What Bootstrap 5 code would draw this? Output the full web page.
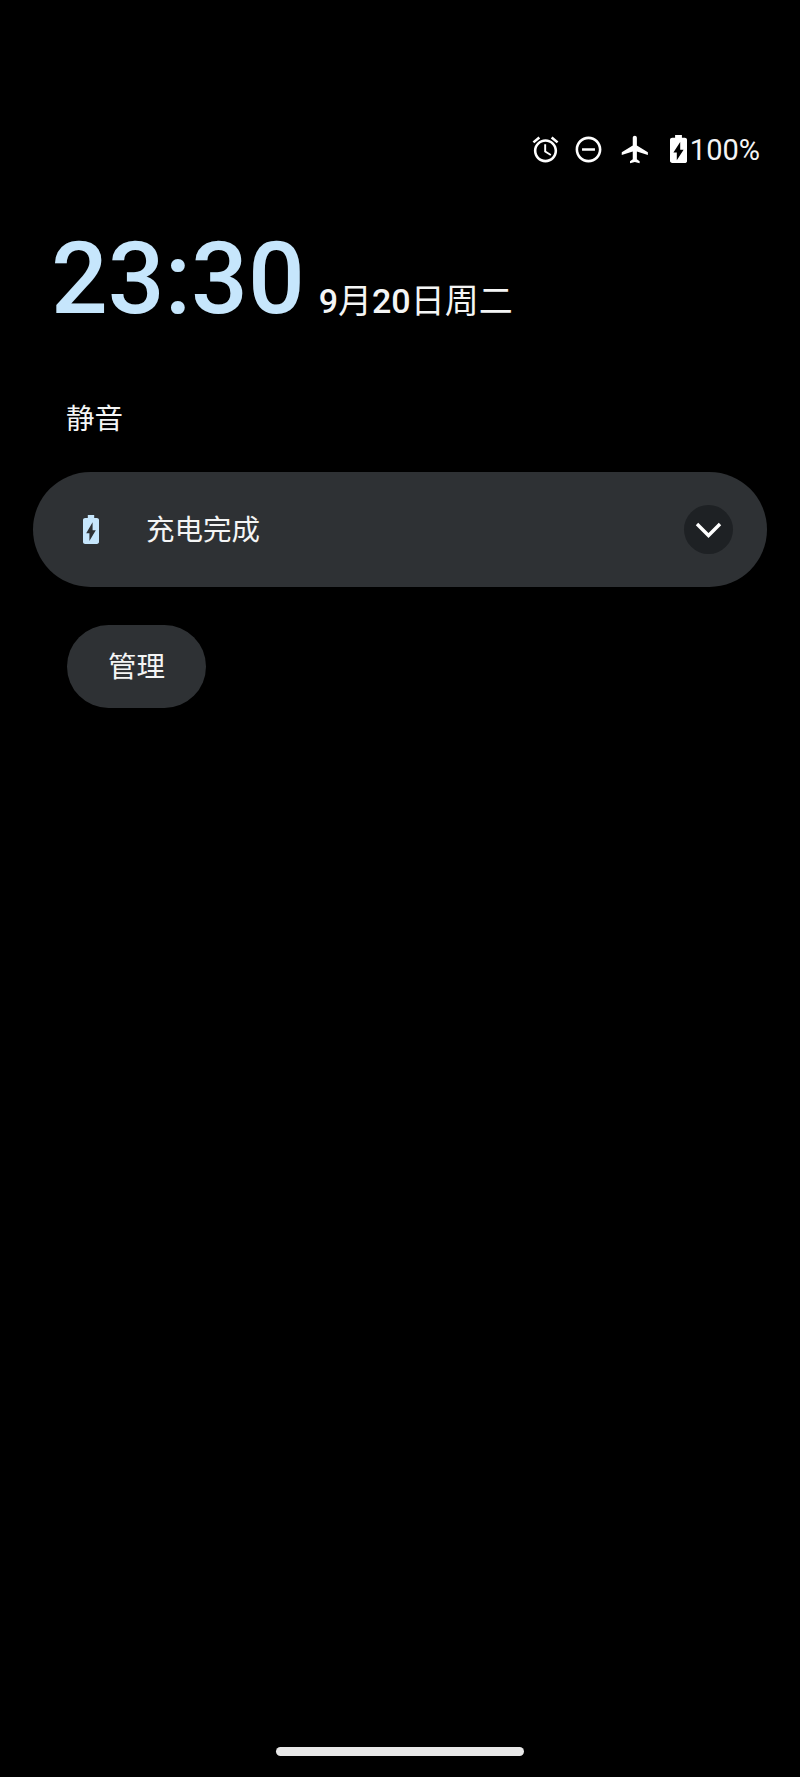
<!DOCTYPE html>
<html lang="zh-CN">
<head>
    <meta charset="UTF-8">
    <meta name="viewport" content="width=device-width, initial-scale=1.0">
    <title>Lock screen notifications</title>
    <link href="https://cdn.jsdelivr.net/npm/bootstrap@5.3.0/dist/css/bootstrap.min.css" rel="stylesheet">
    <style>
        body {
            background-color: #000;
            color: #f4f5f5;
            font-family: Roboto, "Noto Sans CJK SC", sans-serif;
            height: 1777px;
            overflow: hidden;
        }
        .screen {
            height: 1777px;
        }
        .status-row {
            height: 40px;
            margin-top: 129px;
            padding-right: 40px;
        }
        .status-row svg {
            fill: #fff;
            display: block;
        }
        .icon-alarm {
            width: 31px;
            height: 31px;
            margin-right: 12px;
        }
        .icon-dnd {
            width: 31px;
            height: 31px;
            margin-right: 15px;
        }
        .icon-plane {
            width: 33px;
            height: 33px;
            margin-right: 18px;
        }
        .icon-battery {
            width: 17px;
            height: 28px;
            margin-right: 3px;
        }
        .battery-text {
            font-size: 29px;
            line-height: 40px;
            padding-top: 2px;
        }
        .clock-row {
            height: 120px;
            margin-top: 50px;
            padding-left: 51px;
        }
        .clock-time {
            color: #c6e6fc;
            font-size: 100px;
            font-weight: 500;
            line-height: 120px;
            margin-right: 14px;
        }
        .clock-date {
            font-size: 34px;
        }
        .date-num {
            font-weight: 500;
        }
        .mode-label {
            font-size: 28.5px;
            line-height: 40px;
            margin-top: 61px;
            padding-left: 66px;
        }
        .charge-pill {
            background-color: #2e3134;
            border-radius: 58px;
            height: 115px;
            margin: 32px 33px 0;
            padding: 0 34px 0 50px;
        }
        .charge-pill svg.battery-small {
            fill: #c6e6fc;
            width: 16px;
            height: 29px;
            margin-right: 47px;
            flex-shrink: 0;
        }
        .charge-title {
            font-size: 28.5px;
            padding-top: 4px;
        }
        .expand-circle {
            background-color: #1e2124;
            border-radius: 50%;
            width: 49px;
            height: 49px;
        }
        .manage-btn {
            background-color: #2e3134;
            border: 0;
            border-radius: 42px;
            color: #f4f5f5;
            display: block;
            font-size: 28.5px;
            height: 83px;
            margin: 38px 0 0 67px;
            padding: 4px 0 0;
            width: 139px;
        }
        .home-bar {
            background-color: #e8e8e8;
            border-radius: 5px;
            height: 9px;
            width: 248px;
            margin-bottom: 21px;
        }
    </style>
</head>
<body>
    <div class="screen d-flex flex-column">
        <div class="status-row d-flex justify-content-end align-items-center">
            <svg class="icon-alarm" viewBox="0 0 24 24"><path d="M22 5.72l-4.6-3.86-1.29 1.53 4.6 3.86L22 5.72zM7.88 3.39L6.6 1.86 2 5.71l1.29 1.53 4.59-3.85zM12.5 8H11v6l4.75 2.85.75-1.23-4-2.37V8zM12 4c-4.97 0-9 4.03-9 9s4.03 9 9 9 9-4.03 9-9-4.03-9-9-9zm0 16c-3.87 0-7-3.13-7-7s3.13-7 7-7 7 3.13 7 7-3.13 7-7 7z"/></svg>
            <svg class="icon-dnd" viewBox="0 0 24 24"><path d="M12 2C6.48 2 2 6.48 2 12s4.48 10 10 10 10-4.48 10-10S17.52 2 12 2zm0 18c-4.42 0-8-3.58-8-8s3.58-8 8-8 8 3.58 8 8-3.58 8-8 8zM7 11h10v2H7z"/></svg>
            <svg class="icon-plane" viewBox="0 0 24 24"><path d="M21 16v-2l-8-5V3.5c0-.83-.67-1.5-1.5-1.5S10 2.67 10 3.5V9l-8 5v2l8-2.5V19l-2 1.5V22l3.5-1 3.5 1v-1.5L13 19v-5.5l8 2.5z"/></svg>
            <svg class="icon-battery" viewBox="7 2 10 20" preserveAspectRatio="none"><path fill-rule="evenodd" d="M15.67 4H14V2h-4v2H8.33C7.6 4 7 4.6 7 5.33v15.33C7 21.4 7.6 22 8.33 22h7.33c.74 0 1.34-.6 1.34-1.33V5.33C17 4.6 16.4 4 15.67 4zM11 20v-5.5H9L13 7v5.5h2L11 20z"/></svg>
            <span class="battery-text">100%</span>
        </div>

        <div class="clock-row d-flex align-items-baseline">
            <span class="clock-time">23:30</span>
            <span class="clock-date"><span class="date-num">9</span>月<span class="date-num">20</span>日周二</span>
        </div>

        <div class="mode-label">静音</div>

        <div class="charge-pill d-flex align-items-center">
            <svg class="battery-small" viewBox="7 2 10 20" preserveAspectRatio="none"><path fill-rule="evenodd" d="M15.67 4H14V2h-4v2H8.33C7.6 4 7 4.6 7 5.33v15.33C7 21.4 7.6 22 8.33 22h7.33c.74 0 1.34-.6 1.34-1.33V5.33C17 4.6 16.4 4 15.67 4zM11 20v-5.5H9L13 7v5.5h2L11 20z"/></svg>
            <span class="charge-title flex-grow-1">充电完成</span>
            <div class="expand-circle d-flex align-items-center justify-content-center">
                <svg width="29" height="18" viewBox="0 0 29 18"><path d="M3 3l11.5 11.5L26 3" fill="none" stroke="#fff" stroke-width="3.4"/></svg>
            </div>
        </div>

        <button type="button" class="manage-btn">管理</button>

        <div class="mt-auto d-flex justify-content-center">
            <div class="home-bar"></div>
        </div>
    </div>

    <script src="https://cdn.jsdelivr.net/npm/bootstrap@5.3.0/dist/js/bootstrap.bundle.min.js"></script>
</body>
</html>
